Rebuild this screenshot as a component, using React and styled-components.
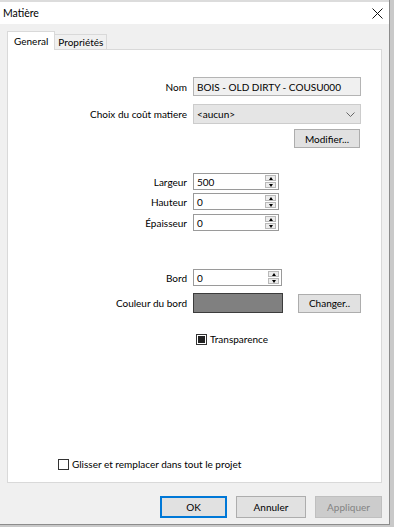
import styled, { createGlobalStyle } from "styled-components";

const Global = createGlobalStyle`
  html, body {
    margin: 0;
    padding: 0;
    background: #c9c9c9;
  }
  body {
    font-family: Lato, "Noto Sans", sans-serif;
    font-size: 10px;
    color: #000;
  }
`;

const Window = styled.div`
  width: 390px;
  height: 525px;
  background: #f0f0f0;
  border-right: 1px solid #8c8c8c;
  border-bottom: 1px solid #8c8c8c;
  display: flex;
  flex-direction: column;
  box-sizing: border-box;
`;

const TitleBar = styled.div`
  height: 24px;
  background: #fff;
  display: flex;
  align-items: center;
  justify-content: space-between;
  padding: 0 6px 0 3px;
  border-top: 2px solid #dcdcdc;
  box-sizing: border-box;
  font-size: 10.5px;
`;

const Close = styled.svg`
  width: 11px;
  height: 11px;
`;

const Tabs = styled.div`
  display: flex;
  align-items: flex-end;
  padding: 7px 7px 0;
  height: 25px;
  box-sizing: border-box;
`;

const Tab = styled.div`
  height: ${(p) => (p.$active ? "19px" : "15px")};
  padding: ${(p) => (p.$active ? "0 6px" : "0 3px")};
  background: ${(p) => (p.$active ? "#fff" : "#f0f0f0")};
  border: 1px solid #d9d9d9;
  border-bottom: none;
  ${(p) => (p.$active ? "" : "border-left: none;")}
  display: flex;
  align-items: center;
  box-sizing: border-box;
  margin-bottom: ${(p) => (p.$active ? "-1px" : "0")};
  position: relative;
  z-index: ${(p) => (p.$active ? 1 : 0)};
`;

const Panel = styled.div`
  margin: 0 7px;
  height: 434px;
  background: #fff;
  border: 1px solid #d9d9d9;
  box-sizing: border-box;
  display: flex;
  flex-direction: column;
  padding-top: 27px;
`;

const Row = styled.div`
  display: grid;
  grid-template-columns: 179px auto auto 1fr;
  column-gap: 6px;
  align-items: center;
  margin-top: ${(p) => p.$mt || 0}px;
`;

const Label = styled.span`
  text-align: right;
  white-space: nowrap;
`;

const TextBox = styled.div`
  width: 168px;
  height: 19px;
  box-sizing: border-box;
  border: 1px solid #b4b4b4;
  background: #f0f0f0;
  padding-left: 3px;
  display: flex;
  align-items: center;
  white-space: nowrap;
`;

const Select = styled(TextBox)`
  background: #e5e5e5;
  border-color: #cccccc;
  justify-content: space-between;
  padding-right: 5px;
  height: 20px;
`;

const Button = styled.div`
  width: ${(p) => p.$w}px;
  height: ${(p) => p.$h || 19}px;
  box-sizing: border-box;
  border: 1px solid ${(p) => (p.$primary ? "#0078d7" : p.$disabled ? "#bfbfbf" : "#adadad")};
  ${(p) => (p.$primary ? "box-shadow: inset 0 0 0 1px #0078d7;" : "")}
  background: ${(p) => (p.$disabled ? "#cccccc" : "#e1e1e1")};
  color: ${(p) => (p.$disabled ? "#838383" : "#000")};
  display: flex;
  align-items: center;
  justify-content: center;
  margin-left: ${(p) => p.$ml || 0}px;
`;

const Right = styled.div`
  display: flex;
  justify-content: flex-end;
  padding-right: 21px;
  margin-top: ${(p) => p.$mt || 0}px;
`;

const Spin = styled.div`
  width: ${(p) => p.$w || 86}px;
  height: 17px;
  box-sizing: border-box;
  border: 1px solid #9a9a9a;
  background: #fff;
  display: flex;
  align-items: center;
  justify-content: space-between;
  padding-left: 3px;
`;

const Arrows = styled.div`
  display: flex;
  flex-direction: column;
  gap: 1px;
  margin-right: 2px;
`;

const Arrow = styled.div`
  width: 11px;
  height: 6px;
  box-sizing: border-box;
  background: #ececec;
  border: 1px solid #b9b9b9;
  display: flex;
  align-items: center;
  justify-content: center;
  &::after {
    content: "";
    border-left: 2.5px solid transparent;
    border-right: 2.5px solid transparent;
    ${(p) => (p.$up ? "border-bottom" : "border-top")}: 3px solid #000;
  }
`;

const Swatch = styled.div`
  width: 90px;
  height: 20px;
  box-sizing: border-box;
  border: 1px solid #3c3c3c;
  background: #808080;
`;

const CheckRow = styled.div`
  display: flex;
  align-items: center;
  gap: 3px;
  padding-left: ${(p) => p.$pl}px;
  margin-top: ${(p) => p.$mt || 0}px;
`;

const Box = styled.div`
  width: 11px;
  height: 11px;
  box-sizing: border-box;
  border: 1px solid #333;
  background: #fff;
  display: flex;
  align-items: center;
  justify-content: center;
  &::after {
    content: "";
    display: ${(p) => (p.$filled ? "block" : "none")};
    width: 7px;
    height: 7px;
    background: #222;
  }
`;

const Footer = styled.div`
  display: flex;
  justify-content: flex-end;
  gap: 9px;
  padding: 13px 7px 0;
`;

const SpinField = ({ value, w }) => (
  <Spin $w={w}>
    <span>{value}</span>
    <Arrows>
      <Arrow $up />
      <Arrow />
    </Arrows>
  </Spin>
);

export default function App() {
  return (
    <>
      <Global />
      <Window>
        <TitleBar>
          <span>Matière</span>
          <Close viewBox="0 0 11 11">
            <path d="M0.5 0.5L10.5 10.5M10.5 0.5L0.5 10.5" stroke="#111" strokeWidth="1" />
          </Close>
        </TitleBar>
        <Tabs>
          <Tab $active>General</Tab>
          <Tab>Propriétés</Tab>
        </Tabs>
        <Panel>
          <Row>
            <Label>Nom</Label>
            <TextBox>BOIS - OLD DIRTY - COUSU000</TextBox>
          </Row>
          <Row $mt={8}>
            <Label>Choix du coût matiere</Label>
            <Select>
              <span>&lt;aucun&gt;</span>
              <svg width="9" height="5" viewBox="0 0 9 5">
                <path d="M0.5 0.5L4.5 4.5L8.5 0.5" fill="none" stroke="#666" />
              </svg>
            </Select>
          </Row>
          <Right $mt={5}>
            <Button $w={66}>Modifier...</Button>
          </Right>
          <Row $mt={25}>
            <Label>Largeur</Label>
            <SpinField value="500" />
          </Row>
          <Row $mt={3}>
            <Label>Hauteur</Label>
            <SpinField value="0" />
          </Row>
          <Row $mt={4}>
            <Label>Épaisseur</Label>
            <SpinField value="0" />
          </Row>
          <Row $mt={38}>
            <Label>Bord</Label>
            <SpinField value="0" w={89} />
          </Row>
          <Row $mt={7}>
            <Label>Couleur du bord</Label>
            <Swatch />
            <Button $w={63} $ml={9}>Changer..</Button>
          </Row>
          <CheckRow $pl={188} $mt={20}>
            <Box $filled />
            <span>Transparence</span>
          </CheckRow>
          <CheckRow $pl={50} $mt={113}>
            <Box />
            <span>Glisser et remplacer dans tout le projet</span>
          </CheckRow>
        </Panel>
        <Footer>
          <Button $w={67} $h={22} $primary>OK</Button>
          <Button $w={70} $h={22}>Annuler</Button>
          <Button $w={67} $h={22} $disabled>Appliquer</Button>
        </Footer>
      </Window>
    </>
  );
}
